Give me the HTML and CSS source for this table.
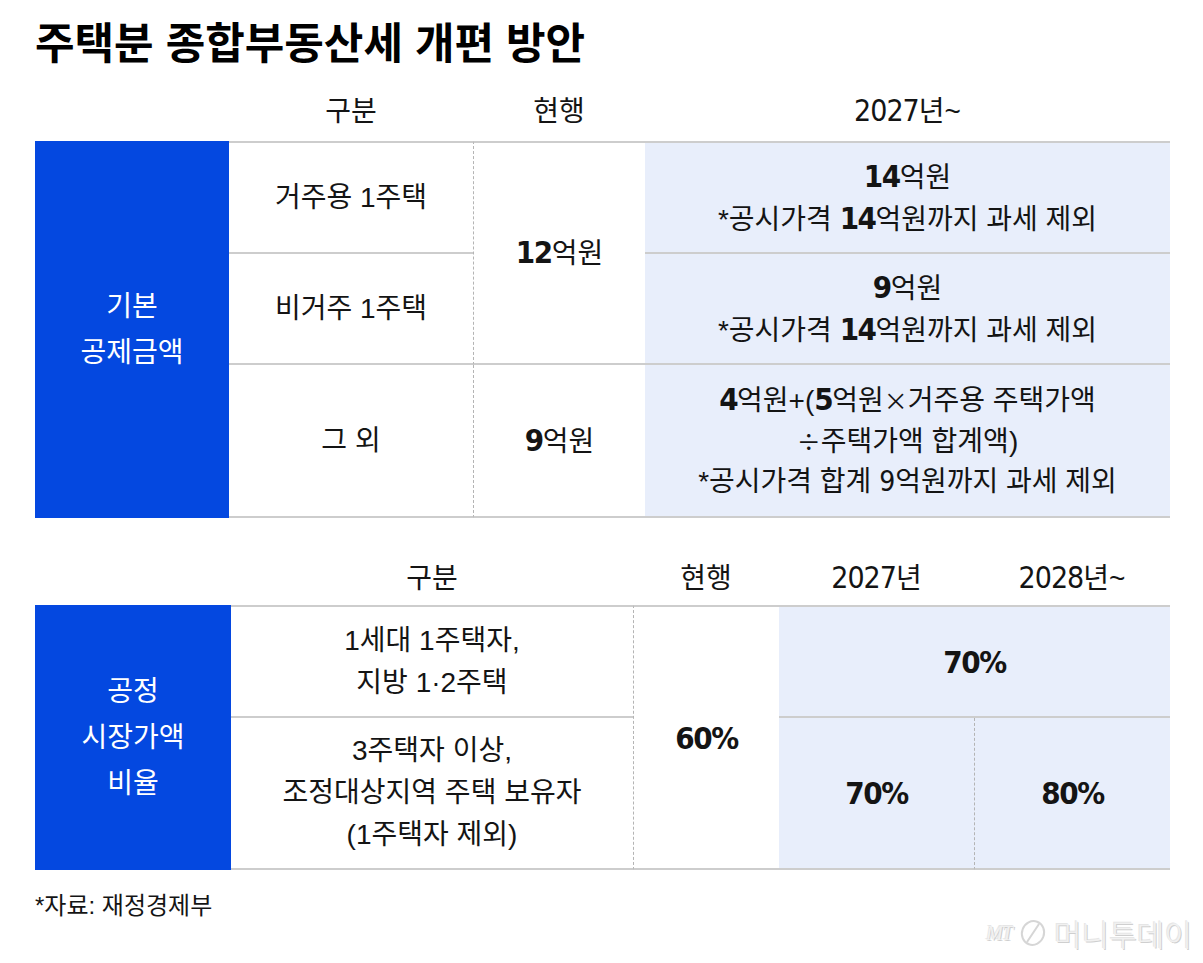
FILE: index.html
```html
<!DOCTYPE html>
<html lang="ko">
<head>
<meta charset="utf-8">
<title>주택분 종합부동산세 개편 방안</title>
<link rel="stylesheet" href="styles.css">
</head>
<body>
<div class="page">
  <h1 class="title">주택분 종합부동산세 개편 방안</h1>

  <div class="head head1">
    <div></div>
    <div>구분</div>
    <div>현행</div>
    <div><span class="nr">2027</span>년~</div>
  </div>

  <div class="t1">
    <div class="side s1">기본<br>공제금액</div>
    <div class="cell top a1">거주용 1주택</div>
    <div class="cell top dash n1"><span><b>12</b>억원</span></div>
    <div class="cell top new b1"><span><b>14</b>억원</span><span>*공시가격 <b>14</b>억원까지 과세 제외</span></div>
    <div class="cell a2">비거주 1주택</div>
    <div class="cell new b2"><span><b>9</b>억원</span><span>*공시가격 <b>14</b>억원까지 과세 제외</span></div>
    <div class="cell a3">그 외</div>
    <div class="cell dash n2"><span><b>9</b>억원</span></div>
    <div class="cell new b3"><span><b>4</b>억원+(<b>5</b>억원<span class="op">×</span>거주용 주택가액</span><span><span class="op">÷</span>주택가액 합계액)</span><span>*공시가격 합계 <span class="nr">9</span>억원까지 과세 제외</span></div>
  </div>

  <div class="head head2">
    <div></div>
    <div>구분</div>
    <div>현행</div>
    <div><span class="nr">2027</span>년</div>
    <div><span class="nr">2028</span>년~</div>
  </div>

  <div class="t2">
    <div class="side s2">공정<br>시장가액<br>비율</div>
    <div class="cell top c1"><span>1세대 1주택자,</span><span>지방 1·2주택</span></div>
    <div class="cell top dash m1"><b>60%</b></div>
    <div class="cell top new d1"><b>70%</b></div>
    <div class="cell c2"><span>3주택자 이상,</span><span>조정대상지역 주택 보유자</span><span>(1주택자 제외)</span></div>
    <div class="cell new d2"><b>70%</b></div>
    <div class="cell new dash d3"><b>80%</b></div>
  </div>

  <div class="foot">
    <p class="source">*자료: 재정경제부</p>
    <div class="mark">
      <span class="mt">MT</span>
      <svg class="logo" width="30" height="30" viewBox="0 0 30 30" aria-hidden="true">
        <ellipse cx="15" cy="15" rx="11" ry="12" fill="none" stroke="#d6d6d6" stroke-width="2" transform="rotate(20 15 15)"/>
        <path d="M9 24 L21 6" stroke="#d6d6d6" stroke-width="2" fill="none"/>
      </svg>
      <span class="mname">머니투데이</span>
    </div>
  </div>
</div>
</body>
</html>
```

FILE: styles.css
```css
html, body {
  margin: 0;
  padding: 0;
  background: #ffffff;
}

body {
  font-family: "Liberation Sans", "Noto Sans CJK KR", sans-serif;
  color: #141414;
}

.page {
  width: 1135px;
  padding: 0 0 0 35px;
}

.title {
  margin: 0;
  padding-top: 19px;
  font-family: "Liberation Sans", "Noto Sans CJK KR", sans-serif;
  font-size: 43px;
  line-height: 50px;
  font-weight: 700;
  color: #000;
  letter-spacing: 0;
}

.nr, .cell b {
  font-family: "DejaVu Sans Condensed", "Liberation Sans Narrow", "Liberation Sans", sans-serif;
}

.head {
  display: grid;
  align-items: center;
  justify-items: center;
  font-size: 28px;
}

.head .nr {
  font-size: 30px;
  letter-spacing: -1px;
}

.head1 {
  margin-top: 14px;
  height: 58px;
  padding-bottom: 6px;
  box-sizing: border-box;
  grid-template-columns: 194px 244px 172px 525px;
}

.head2 {
  margin-top: 31px;
  height: 56px;
  padding-bottom: 2px;
  box-sizing: border-box;
  grid-template-columns: 196px 402px 146px 195px 196px;
}

.t1, .t2 {
  display: grid;
}

.t1 {
  grid-template-columns: 194px 244px 172px 525px;
  grid-template-rows: 113px 111px 153px;
}

.t2 {
  grid-template-columns: 196px 402px 146px 195px 196px;
  grid-template-rows: 113px 152px;
}

.side {
  background: #0448e0;
  color: #fff;
  font-size: 28px;
  line-height: 46px;
  display: flex;
  align-items: center;
  justify-content: center;
  text-align: center;
}

.s1 { grid-column: 1; grid-row: 1 / 4; }
.s2 { grid-column: 1; grid-row: 1 / 3; }

.cell {
  box-sizing: border-box;
  border-bottom: 2px solid #cdcdcd;
  display: flex;
  flex-direction: column;
  align-items: center;
  justify-content: center;
  text-align: center;
  font-size: 28px;
  line-height: 42px;
}

.cell.top { border-top: 2px solid #cdcdcd; }
.cell.dash { border-left: 1px dashed #b4b4b4; }
.cell.new { background: #e8eefb; }

.cell b {
  font-weight: 700;
  font-size: 31px;
  letter-spacing: -1.5px;
}

.t1 .new { line-height: 40px; }

.op {
  font-family: "Noto Sans CJK KR", sans-serif;
  font-size: 24px;
}

.a1 { grid-column: 2; grid-row: 1; }
.a2 { grid-column: 2; grid-row: 2; }
.a3 { grid-column: 2; grid-row: 3; }
.n1 { grid-column: 3; grid-row: 1 / 3; }
.n2 { grid-column: 3; grid-row: 3; }
.b1 { grid-column: 4; grid-row: 1; }
.b2 { grid-column: 4; grid-row: 2; }
.b3 { grid-column: 4; grid-row: 3; }

.c1 { grid-column: 2; grid-row: 1; }
.c2 { grid-column: 2; grid-row: 2; }
.m1 { grid-column: 3; grid-row: 1 / 3; }
.d1 { grid-column: 4 / 6; grid-row: 1; }
.d2 { grid-column: 4; grid-row: 2; }
.d3 { grid-column: 5; grid-row: 2; }

.foot {
  display: flex;
  justify-content: space-between;
  align-items: flex-start;
  margin-top: 20px;
}

.source {
  margin: 0;
  font-size: 24px;
  line-height: 32px;
}

.mark {
  display: flex;
  align-items: center;
  gap: 6px;
  margin-top: 26px;
  margin-right: -22px;
  color: #f1f1f1;
  text-shadow: 1px 1px 0 #cfcfcf, -1px -1px 0 #e6e6e6;
}

.mt {
  font-family: "Liberation Serif", serif;
  font-style: italic;
  font-size: 20px;
  letter-spacing: -1px;
}

.mname {
  font-family: "Noto Sans CJK KR", sans-serif;
  font-weight: 300;
  font-size: 30px;
  line-height: 34px;
}
```
